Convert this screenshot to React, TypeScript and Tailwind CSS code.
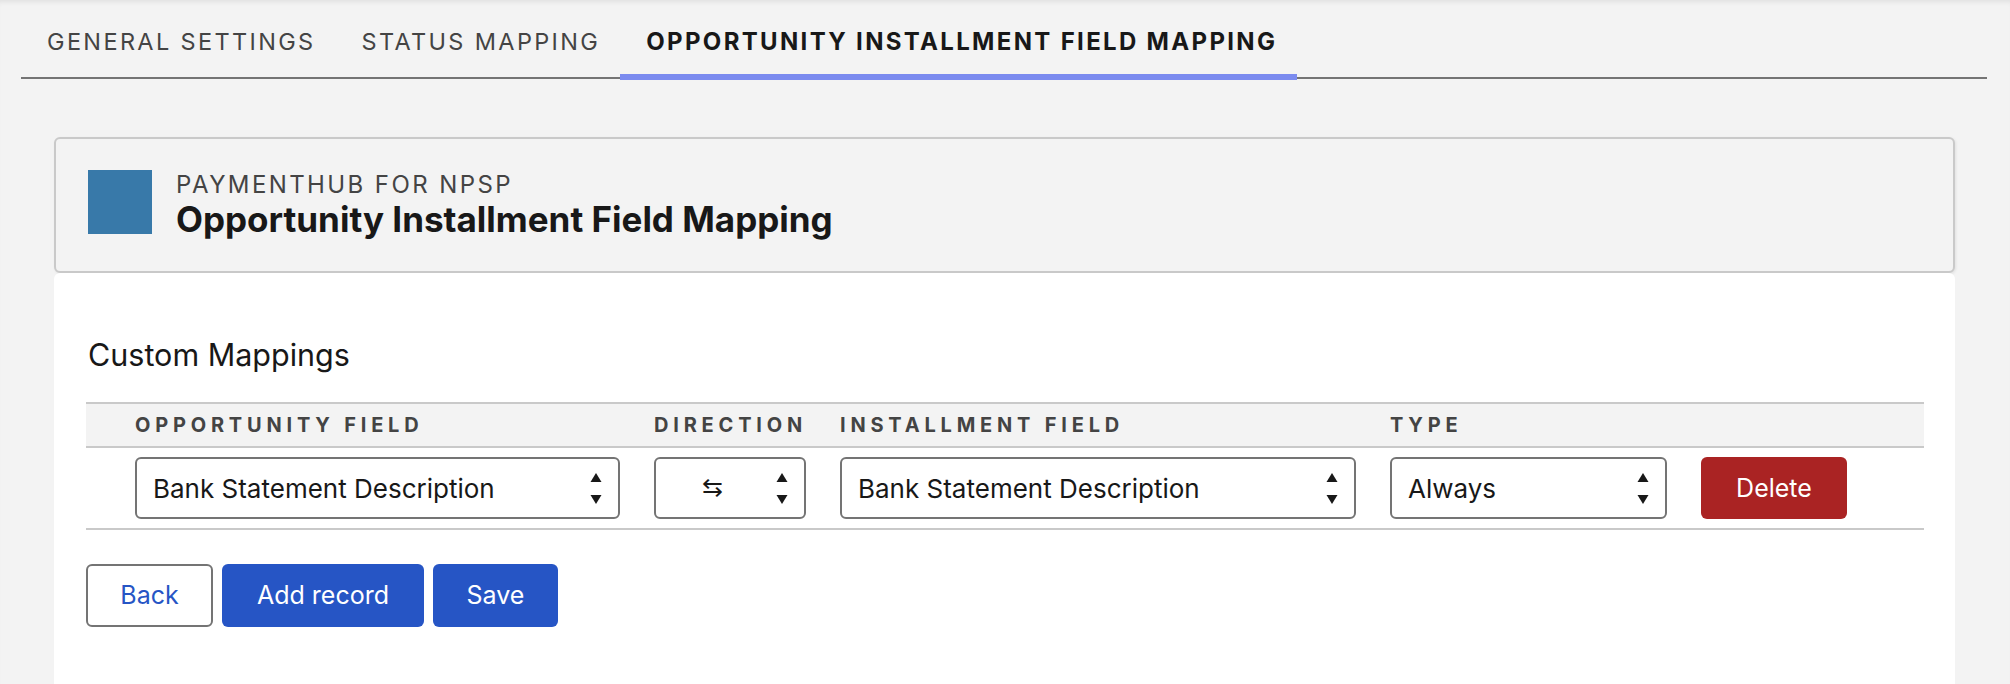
import React from "react";

const tabs = ["General Settings", "Status Mapping", "Opportunity Installment Field Mapping"];

function Arrows() {
  return (
    <svg width="12" height="31" viewBox="0 0 12 31" className="shrink-0">
      <polygon points="6,0 11.5,9 0.5,9" fill="#181818" />
      <polygon points="0.5,22 11.5,22 6,31" fill="#181818" />
    </svg>
  );
}

function FakeSelect({ value, glyph }: { value: string; glyph?: boolean }) {
  return (
    <div className="h-[62px] flex items-center justify-between rounded-[6px] border-2 border-[#747474] bg-white pl-[16px] pr-[16px] text-[26px] text-[#181818]">
      <span className={glyph ? "pl-[30px] text-[25px]" : ""}>{value}</span>
      <Arrows />
    </div>
  );
}

export default function App() {
  return (
    <div
      className="min-h-screen bg-[#f3f3f3] shadow-[inset_0_5px_5px_-3px_rgba(0,0,0,0.08)] overflow-hidden"
      style={{ fontFamily: "Inter, 'Liberation Sans', sans-serif" }}
    >
      <nav className="ml-[21px] mr-[23px] flex border-b-2 border-[#747474]">
        {tabs.map((t, i) => (
          <div
            key={t}
            className={`h-[80px] -mb-[3px] pl-[26px] pr-[20px] pt-[10px] flex items-center uppercase border-b-[6px] ${
              i === 2
                ? "border-[#7b8bef] font-bold text-[#181818] text-[24px] tracking-[0.097em]"
                : "border-transparent text-[#444444] text-[23.5px] tracking-[0.1em]"
            }`}
          >
            {t}
          </div>
        ))}
      </nav>

      <div className="ml-[54px] mr-[55px] mt-[58px]">
        <div className="h-[136px] rounded-[6px] border-2 border-[#c9c9c9] bg-[#f3f3f3] shadow-[1px_1px_3px_rgba(0,0,0,0.08)] flex items-start pl-[32px] pt-[31px]">
          <div className="w-[64px] h-[64px] bg-[#3879a9] shrink-0" />
          <div className="ml-[24px] mt-[1px]">
            <div className="text-[24px] leading-[28px] uppercase tracking-[0.1em] text-[#444444]">PaymentHub for NPSP</div>
            <div className="text-[35px] leading-[40px] font-bold text-[#181818]">Opportunity Installment Field Mapping</div>
          </div>
        </div>

        <div className="bg-white rounded-t-[6px] min-h-[420px] pt-[64px]">
          <h2 className="pl-[34px] text-[30.5px] leading-[36px] text-[#181818]">Custom Mappings</h2>

          <div className="ml-[32px] mr-[31px] mt-[29px]">
            <div className="grid grid-cols-[485px_152px_516px_277px_146px] gap-x-[34px] pl-[49px] h-[46px] items-center bg-[#f3f3f3] border-y-2 border-[#c9c9c9] text-[20px] leading-[24px] font-bold uppercase tracking-[0.24em] text-[#444444] whitespace-nowrap">
              <div>Opportunity Field</div>
              <div>Direction</div>
              <div>Installment Field</div>
              <div>Type</div>
              <div />
            </div>
            <div className="grid grid-cols-[485px_152px_516px_277px_146px] gap-x-[34px] pl-[49px] h-[82px] items-center border-b-2 border-[#c9c9c9]">
              <FakeSelect value="Bank Statement Description" />
              <FakeSelect value="⇆" glyph />
              <FakeSelect value="Bank Statement Description" />
              <FakeSelect value="Always" />
              <button className="h-[62px] rounded-[6px] bg-[#aa2323] text-white text-[25px] pt-[2px]">Delete</button>
            </div>

            <div className="flex gap-[9px] mt-[34px]">
              <button className="w-[127px] h-[63px] rounded-[6px] border-2 border-[#747474] bg-white text-[25px] text-[#2655c5]">Back</button>
              <button className="w-[202px] h-[63px] rounded-[6px] bg-[#2655c5] text-[25px] text-white">Add record</button>
              <button className="w-[125px] h-[63px] rounded-[6px] bg-[#2655c5] text-[25px] text-white">Save</button>
            </div>
          </div>
        </div>
      </div>
    </div>
  );
}
